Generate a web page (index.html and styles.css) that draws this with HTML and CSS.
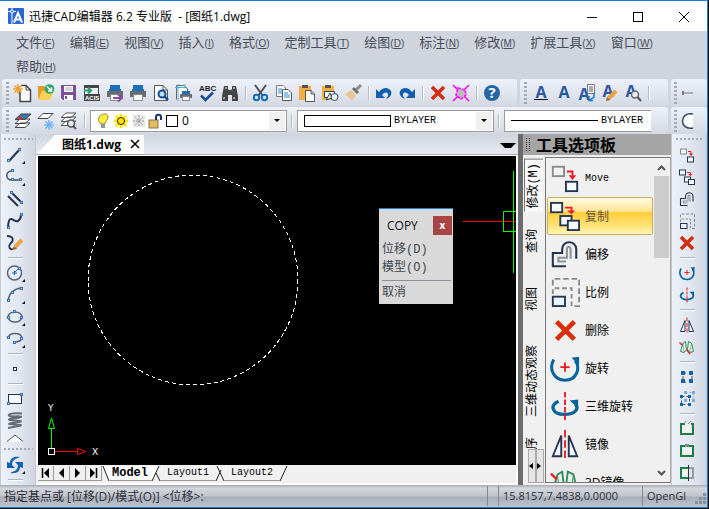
FILE: index.html
```
<!DOCTYPE html>
<html lang="zh-CN">
<head>
    <meta charset="UTF-8">
    <meta name="viewport" content="width=device-width, initial-scale=1.0">
    <title>迅捷CAD编辑器 6.2 专业版</title>
    <link rel="stylesheet" href="styles.css">
</head>
<body>
    <!-- 图标库 -->
    <svg class="sprite" aria-hidden="true">
        <symbol id="i-new" viewBox="0 0 22 22"><path d="M8 7.500V19.500H18.500V8L14 3.500H9" fill="#fff" stroke="#454545" stroke-width="1.500"/><path d="M14 3.500V8H18.500" fill="none" stroke="#454545"/><path d="M6 2V12M1 7H11M2.500 3.500L9.500 10.500M9.500 3.500L2.500 10.500" stroke="#f0a02c" stroke-width="1.500"/></symbol>
        <symbol id="i-open" viewBox="0 0 22 22"><path d="M3 17V4H9L11 6V17Z" fill="#e79a26"/><path d="M3 18L7 9H19L15 18Z" fill="#ffd257"/><circle cx="14.500" cy="7" r="4.800" fill="#2fa56d"/><path d="M12 4.500L16.500 9M16.500 5.500V9H13" stroke="#fff" stroke-width="1.500" fill="none"/></symbol>
        <symbol id="i-save" viewBox="0 0 22 22"><path d="M3 3H18V18H5L3 16Z" fill="#7d4f96"/><rect x="6" y="4" width="9" height="6" fill="#fff"/><path d="M7 6H14M7 8H14" stroke="#aaa"/><rect x="6" y="13" width="9" height="5" fill="#fff"/><rect x="7" y="14" width="2" height="3" fill="#7d4f96"/></symbol>
        <symbol id="i-acis" viewBox="0 0 22 22"><rect x="3.500" y="3.500" width="14" height="14" fill="#e8eef2" stroke="#454545"/><path d="M3 5H18" stroke="#454545" stroke-width="2"/><path d="M3 8.500H9M7 5.500L10 8.500L7 11.500" stroke="#2b9b69" stroke-width="2" fill="none"/><rect x="3" y="12" width="16" height="7" fill="#454545"/><text x="4" y="18" class="acis-label">ACIS</text></symbol>
        <symbol id="i-printer" viewBox="0 0 22 22"><rect x="6" y="3" width="10" height="5" fill="#1c6fb8"/><path d="M3 9H19V15H3Z" fill="#666c72"/><rect x="5" y="7" width="12" height="2" fill="#1c6fb8"/><path d="M6.500 12.500H15.500V18.500H6.500Z" fill="#fff" stroke="#888"/></symbol>
        <symbol id="i-plot" viewBox="0 0 22 22"><use href="#i-printer"/><path d="M9 16H17M14 12.500L18 16L14 19.500" stroke="#854fa4" stroke-width="2" fill="none"/></symbol>
        <symbol id="i-preview" viewBox="0 0 22 22"><path d="M4.500 3.500H13L17.500 8V18.500H4.500Z" fill="#fff" stroke="#555"/><path d="M13 3.500V8H17" fill="none" stroke="#555"/><circle cx="12" cy="12" r="3.500" fill="#b9ddf5" stroke="#144d93" stroke-width="2"/><path d="M14.500 14.500L18 18" stroke="#144d93" stroke-width="2.500"/></symbol>
        <symbol id="i-pages" viewBox="0 0 22 22"><path d="M3.500 17.500V3.500H11L14.500 7V10" fill="#fff" stroke="#666"/><path d="M5 2V19M12 2V6M2 5.500H14" stroke="#49b3d5"/><rect x="9" y="9" width="8" height="3" fill="#1c6fb8"/><rect x="7" y="12" width="12" height="4" fill="#666c72"/><rect x="9.500" y="14.500" width="7" height="4" fill="#fff" stroke="#888"/></symbol>
        <symbol id="i-spell" viewBox="0 0 22 22"><text x="3" y="9" class="abc-label">ABC</text><path d="M5 13.500L9.500 18L17 10.500" stroke="#164a9c" stroke-width="2.500" fill="none"/></symbol>
        <symbol id="i-find" viewBox="0 0 22 22"><path d="M5 4H9V7L10 8H12L13 7V4H17L19 14V19H13V13H9V19H3V14Z" fill="#454545"/><path d="M5 15V17M15 15V17M6 6H8M14 6H16" stroke="#fff"/></symbol>
        <symbol id="i-cut" viewBox="0 0 22 22"><path d="M5 3L13 14M16 3L8 14" stroke="#4a5057" stroke-width="2"/><circle cx="6.500" cy="15.500" r="2.700" fill="none" stroke="#156dba" stroke-width="2"/><circle cx="14.500" cy="15.500" r="2.700" fill="none" stroke="#156dba" stroke-width="2"/></symbol>
        <symbol id="i-copydoc" viewBox="0 0 22 22"><path d="M3.500 3.500H10L12.500 6V14.500H3.500Z" fill="#fff" stroke="#777"/><path d="M5 7H9M5 9H9M5 11H9" stroke="#278ad0"/><path d="M9.500 7.500H15L18.500 11V18.500H9.500Z" fill="#fff" stroke="#555"/><path d="M11 11H15M11 13H17M11 15H17" stroke="#278ad0"/></symbol>
        <symbol id="i-paste" viewBox="0 0 22 22"><rect x="3" y="4" width="12" height="14" fill="#f2ad43"/><rect x="6" y="3" width="6" height="3" fill="#555"/><path d="M9.500 8.500H15L18.500 12V19.500H9.500Z" fill="#fff" stroke="#555"/><path d="M15 8V12H18" fill="none" stroke="#555"/></symbol>
        <symbol id="i-pasteblock" viewBox="0 0 22 22"><rect x="3" y="4" width="12" height="14" fill="#f2ad43"/><rect x="6" y="3" width="6" height="3" fill="#555"/><path d="M5.500 9.500H15.500V15.500H5.500Z" fill="#fff" stroke="#31435c"/><path d="M7 18L11 11L13 16Z" fill="#e6f3fc" stroke="#31435c"/><circle cx="15.500" cy="15" r="3.500" fill="#e6f3fc" stroke="#31435c"/></symbol>
        <symbol id="i-brush" viewBox="0 0 22 22"><path d="M3 12L9 8L14 13L10 19Z" fill="#e6c795"/><path d="M10 7L12 5L17 10L15 12Z" fill="#6d6d6d"/><path d="M14 8L19 3" stroke="#8a8a8a" stroke-width="3"/></symbol>
        <symbol id="i-undo" viewBox="0 0 22 22"><path d="M3 7V16H12L9 13C12 9 16 10 15 14L13 17C19 15 20 9 16 7C13 5 9 6 6 10Z" fill="#1160ad"/></symbol>
        <symbol id="i-redo" viewBox="0 0 22 22"><path d="M19 7V16H10L13 13C10 9 6 10 7 14L9 17C3 15 2 9 6 7C9 5 13 6 16 10Z" fill="#1160ad"/></symbol>
        <symbol id="i-delete" viewBox="0 0 22 22"><path d="M5 5L17 17M17 5L5 17" stroke="#d62b0b" stroke-width="3.500"/></symbol>
        <symbol id="i-explode" viewBox="0 0 22 22"><path d="M3 3L8 8M19 3L14 8M3 19L8 14M19 19L14 14" stroke="#f0f" stroke-width="1.500"/><path d="M8 6L15 8L16 13L11 17L6 13Z" fill="#bbb" stroke="#f0f" stroke-width="1.500" stroke-dasharray="3 1"/></symbol>
        <symbol id="i-help" viewBox="0 0 22 22"><circle cx="11" cy="11" r="8" fill="#2465a4"/><text x="11" y="16" text-anchor="middle" class="help-label">?</text></symbol>
        <symbol id="i-text" viewBox="0 0 22 22"><text x="11" y="16" text-anchor="middle" class="a-label">A</text></symbol>
        <symbol id="i-textline" viewBox="0 0 22 22"><text x="11" y="16" text-anchor="middle" class="a-label">A</text><path d="M4 17.500H18" stroke="#111"/></symbol>
        <symbol id="i-textpage" viewBox="0 0 22 22"><text x="8" y="18" text-anchor="middle" class="a-label">A</text><path d="M11.500 2.500H18.500V11.500H11.500Z" fill="#fff" stroke="#777"/><path d="M13 5H17M13 7H17M13 9H17" stroke="#555"/><path d="M18 11V15L14 18M13 14V18.500H17" stroke="#1977c8" stroke-width="1.500" fill="none"/></symbol>
        <symbol id="i-textedit" viewBox="0 0 22 22"><text x="9" y="15" text-anchor="middle" class="a-label">A</text><path d="M9 17L17 9" stroke="#eda43e" stroke-width="4"/><path d="M7 19L8 15L11 18Z" fill="#8d6a48"/></symbol>
        <symbol id="i-textfind" viewBox="0 0 22 22"><text x="9" y="15" text-anchor="middle" class="a-label">A</text><circle cx="13" cy="12.500" r="3.500" fill="#e8edf3" stroke="#666" stroke-width="1.500"/><path d="M15.500 15L19 19" stroke="#555" stroke-width="2"/></symbol>
        <symbol id="i-dash" viewBox="0 0 22 22"><path d="M7 11H17" stroke="#777"/><path d="M7 9V13" stroke="#777" stroke-width="2"/></symbol>
        <symbol id="i-arcpart" viewBox="0 0 22 22"><path d="M17 4C3 1 3 21 17 18" fill="#fff" stroke="#31435c" stroke-width="1.500"/></symbol>
        <symbol id="i-layers" viewBox="0 0 22 22"><path d="M3 17.500H13L18 13H8ZM3 13.500H13L18 9H8Z" fill="#fff" stroke="#444"/><path d="M3 9.500H13L19 4H9Z" fill="#3677ad" stroke="#444"/><rect x="7" y="7" width="3" height="3" fill="#e52b20"/></symbol>
        <symbol id="i-layerfreeze" viewBox="0 0 22 22"><path d="M3 8.500H13L18 3.500H8Z" fill="#fff" stroke="#444"/><path d="M14 10V20M9 15H19M10.500 11.500L17.500 18.500M17.500 11.500L10.500 18.500" stroke="#72b4f1" stroke-width="1.500"/></symbol>
        <symbol id="i-layerfind" viewBox="0 0 22 22"><path d="M3 15.500H13L18 11H8ZM3 11.500H13L18 7H8ZM3 7.500H13L18 3H8Z" fill="#fff" stroke="#555"/><circle cx="13" cy="13.500" r="3.500" fill="#dde8ef" stroke="#555" stroke-width="1.500"/><path d="M15 16L18 19" stroke="#555" stroke-width="2"/></symbol>
        <symbol id="i-line" viewBox="0 0 22 22"><path d="M5 17L16 5" stroke="#24344f" stroke-width="2"/><g class="node"><rect x="3.500" y="15.500" width="2" height="2"/><rect x="14.500" y="4.500" width="2" height="2"/></g></symbol>
        <symbol id="i-poly" viewBox="0 0 22 22"><path d="M8 5C1 5 1 14 8 14H17" stroke="#44506a" stroke-width="1.500" fill="none"/><g class="node"><rect x="7.500" y="3.500" width="2" height="2"/><rect x="7.500" y="12.500" width="2" height="2"/><rect x="15.500" y="12.500" width="2" height="2"/></g></symbol>
        <symbol id="i-double" viewBox="0 0 22 22"><path d="M7 4L17 14M4 8L14 18" stroke="#24344f" stroke-width="2"/><g class="node"><rect x="6.500" y="3.500" width="2" height="2"/><rect x="16.500" y="13.500" width="2" height="2"/></g></symbol>
        <symbol id="i-spline" viewBox="0 0 22 22"><path d="M4 17C5 2 10 13 14 11C17 9 17 7 17 5" stroke="#24344f" stroke-width="2" fill="none"/><g class="node"><rect x="3.500" y="16.500" width="2" height="2"/><rect x="16.500" y="3.500" width="2" height="2"/></g></symbol>
        <symbol id="i-sketch" viewBox="0 0 22 22"><path d="M3 4C10 4 10 9 6 12C4 15 6 18 9 17" stroke="#24344f" stroke-width="1.800" fill="none"/><path d="M11 15L18 8" stroke="#eda43e" stroke-width="4"/><path d="M8 18L10 14L13 17Z" fill="#8f6b42"/></symbol>
        <symbol id="i-circle" viewBox="0 0 22 22"><circle cx="10.500" cy="11" r="7" fill="#e3edf6" stroke="#59647a" stroke-width="1.500"/><path d="M10 11L15 6M8 11H13M10.500 9V13" stroke="#1f5fae"/><g class="node"><rect x="14.500" y="5.500" width="2" height="2"/></g></symbol>
        <symbol id="i-arc" viewBox="0 0 22 22"><path d="M4 17C5 9 9 5 17 4" stroke="#59647a" stroke-width="1.500" fill="none"/><g class="node"><rect x="3.500" y="15.500" width="2" height="2"/><rect x="7.500" y="7.500" width="2" height="2"/><rect x="16.500" y="3.500" width="2" height="2"/></g></symbol>
        <symbol id="i-ellipse" viewBox="0 0 22 22"><ellipse cx="11" cy="11" rx="7" ry="5" fill="#e3edf6" stroke="#59647a" stroke-width="1.500"/><g class="node"><rect x="9.500" y="4.500" width="2" height="2"/><rect x="3.500" y="10.500" width="2" height="2"/><rect x="16.500" y="10.500" width="2" height="2"/></g></symbol>
        <symbol id="i-ellarc" viewBox="0 0 22 22"><path d="M4 10C5 4 17 4 18 10C18 12 15 14 11 14" stroke="#59647a" stroke-width="1.500" fill="none"/><g class="node"><rect x="3.500" y="8.500" width="2" height="2"/><rect x="16.500" y="9.500" width="2" height="2"/><rect x="9.500" y="13.500" width="2" height="2"/></g></symbol>
        <symbol id="i-point" viewBox="0 0 22 22"><rect x="9.500" y="9.500" width="3" height="3" fill="#fff" stroke="#24344f"/></symbol>
        <symbol id="i-rect" viewBox="0 0 22 22"><rect x="4.500" y="6.500" width="13" height="9" fill="#f7faff" stroke="#24344f"/><g class="node"><rect x="16.500" y="5.500" width="2" height="2"/><rect x="3.500" y="14.500" width="2" height="2"/></g></symbol>
        <symbol id="i-helix" viewBox="0 0 22 22"><path d="M18 3.500C2 2 2 7 10 6.500S20 7 12 8S2 10 10 10.500S20 11 12 12.500S2 14 10 14.500S20 15 12 16.500L4 18" fill="none" stroke="#666b74" stroke-width="2"/></symbol>
        <symbol id="i-more" viewBox="0 0 22 12"><path d="M3 9.500L11 3L19 9.500Z" fill="#fff"/><path d="M3 9.500L11 3L19 9.500" fill="none" stroke="#555"/></symbol>
        <symbol id="i-regen" viewBox="0 0 22 22"><path d="M16 3C9 2 6 5 6 9L3 8V14H11L8 11C8 6 11 5 16 3ZM6 19C13 20 16 17 16 13L19 14V8H11L14 11C14 16 11 17 6 19Z" fill="#1261b2"/></symbol>
        <symbol id="i-move" viewBox="0 0 32 32"><rect x="3" y="4" width="12" height="10" fill="#f2f2f2" stroke="#8a8a8a" stroke-width="2"/><path d="M18 9H24V15" stroke="#ec1c24" stroke-width="2" fill="none"/><path d="M20 13H28L24 18Z" fill="#ec1c24"/><rect x="17" y="20" width="12" height="10" fill="#f4faff" stroke="#26344f" stroke-width="2"/></symbol>
        <symbol id="i-copy" viewBox="0 0 32 32"><rect x="1" y="2" width="12" height="10" fill="#f4faff" stroke="#26344f" stroke-width="2"/><path d="M16 7H23V12" stroke="#ec1c24" stroke-width="2" fill="none"/><path d="M18 10H27L23 14Z" fill="#ec1c24"/><rect x="11" y="16" width="12" height="10" fill="#f4faff" stroke="#26344f" stroke-width="2"/><rect x="19" y="21" width="12" height="10" fill="#f4faff" stroke="#26344f" stroke-width="2"/></symbol>
        <symbol id="i-offset" viewBox="0 0 32 32"><path d="M28 21V11C28 1 13 1 13 11V15H3V29H17" fill="none" stroke="#26344f" stroke-width="2.200"/><path d="M22 21V12C22 7 18 7 18 12V20H9V24H17" fill="none" stroke="#8b8f96" stroke-width="2.200"/></symbol>
        <symbol id="i-scale" viewBox="0 0 32 32"><path d="M3 9V2H31V31H24" fill="none" stroke="#8a8a8a" stroke-width="2" stroke-dasharray="6 3"/><path d="M3 18V12H23V30H19" fill="none" stroke="#8a8a8a" stroke-width="2" stroke-dasharray="5 3"/><rect x="3" y="21" width="13" height="10" fill="#e8f5ff" stroke="#26344f" stroke-width="2"/></symbol>
        <symbol id="i-erase" viewBox="0 0 32 32"><path d="M7 7L26 26M26 7L7 26" stroke="#da2d08" stroke-width="5"/></symbol>
        <symbol id="i-rotate" viewBox="0 0 32 32"><path d="M4 7C-2 18 5 29 16 29C28 29 33 17 27 8" fill="none" stroke="#05639c" stroke-width="3.200"/><path d="M23 5L31 4V13Z" fill="#05639c"/><path d="M11 15H21M16 10V20" stroke="#ec1c24" stroke-width="2"/></symbol>
        <symbol id="i-rotate3d" viewBox="0 0 32 32"><path d="M9 11C-1 16 3 25 15 25C28 25 31 18 27 14" fill="none" stroke="#05639c" stroke-width="3.500"/><path d="M21 10L30 9V18Z" fill="#05639c"/><path d="M16 1V32" stroke="#ec1c24" stroke-width="2" stroke-dasharray="6 2"/></symbol>
        <symbol id="i-mirror" viewBox="0 0 32 32"><path d="M12 7V29H3ZM20 7V29H29Z" fill="#eef6ff" stroke="#26344f" stroke-width="2"/><path d="M16 1V32" stroke="#ec1c24" stroke-width="2" stroke-dasharray="8 3"/></symbol>
        <symbol id="i-mirror3d" viewBox="0 0 32 32"><path d="M3 25L8 8L13 5L15 21L10 27ZM29 25L25 8L19 5L17 21L22 27Z" fill="#e6f4eb" stroke="#358b5c" stroke-width="2"/><path d="M8 8L10 27M25 8L22 27" stroke="#358b5c"/><path d="M1 7L7 13M15 21L22 30" stroke="#ec1c24" stroke-width="2.500"/></symbol>
        <symbol id="i-array" viewBox="0 0 22 22"><path d="M7 7H16V16H7Z" fill="none" stroke="#555" stroke-dasharray="3 3"/><g fill="#1263b0"><rect x="5" y="5" width="4" height="4"/><rect x="13" y="5" width="4" height="4"/><rect x="5" y="13" width="4" height="4"/><rect x="13" y="13" width="4" height="4"/></g></symbol>
        <symbol id="i-array3d" viewBox="0 0 22 22"><g fill="#7ea8d8"><rect x="8" y="3" width="3" height="3"/><rect x="16" y="3" width="3" height="3"/><rect x="16" y="11" width="3" height="3"/><rect x="8" y="11" width="3" height="3"/></g><path d="M9.500 4.500H17.500V12.500" fill="none" stroke="#7ea8d8" stroke-dasharray="2 2"/><path d="M5.500 8.500H13.500V16.500H5.500Z" fill="none" stroke="#555" stroke-dasharray="3 2"/><g fill="#1263b0"><rect x="4" y="7" width="3" height="3"/><rect x="12" y="7" width="3" height="3"/><rect x="4" y="15" width="3" height="3"/><rect x="12" y="15" width="3" height="3"/></g></symbol>
        <symbol id="i-break" viewBox="0 0 22 22"><path d="M9 6H5V16H17V6H15" fill="#eef5f0" stroke="#1d7d43" stroke-width="2"/><path d="M8 6L10 3M12 6L15 3" stroke="#888"/></symbol>
        <symbol id="i-breakpt" viewBox="0 0 22 22"><rect x="5" y="6" width="12" height="10" fill="#eef5f0" stroke="#1d7d43" stroke-width="2"/><path d="M9 5.500H13" stroke="#888" stroke-width="3"/></symbol>
        <symbol id="i-trim" viewBox="0 0 22 22"><path d="M12 6H5V16H12" fill="#eef5f0" stroke="#1d7d43" stroke-width="2"/><path d="M13 6H17V16H13" fill="none" stroke="#999" stroke-width="2"/><path d="M12.500 3V19" stroke="#24344f"/></symbol>
    </svg>

    <div class="window">
        <header class="titlebar">
            <svg class="logo" width="16" height="16" viewBox="0 0 16 16" aria-hidden="true"><rect width="16" height="16" rx="1" fill="#2a67cf"/><path d="M4 0V16M0 3.500H8" stroke="#fff" stroke-width="1"/><circle cx="4" cy="3.500" r="1.500" fill="#2a67cf" stroke="#fff"/><path d="M6 14.500L10 5L14 14.500M7.500 11.500H12.500" fill="none" stroke="#fff" stroke-width="2"/></svg>
            <h1>迅捷CAD编辑器 6.2 专业版 &nbsp;- [图纸1.dwg]</h1>
            <div class="win-buttons">
                <button aria-label="最小化"><svg width="12" height="12"><path d="M1 6.500H11" stroke="#000"/></svg></button>
                <button aria-label="最大化"><svg width="12" height="12"><rect x="1.500" y="1.500" width="9" height="9" fill="none" stroke="#000"/></svg></button>
                <button aria-label="关闭"><svg width="12" height="12"><path d="M1 1L11 11M11 1L1 11" stroke="#000"/></svg></button>
            </div>
        </header>

        <nav class="menubar">
            <a href="#">文件<small>(<u>F</u>)</small></a>
            <a href="#">编辑<small>(<u>E</u>)</small></a>
            <a href="#">视图<small>(<u>V</u>)</small></a>
            <a href="#">插入<small>(<u>I</u>)</small></a>
            <a href="#">格式<small>(<u>O</u>)</small></a>
            <a href="#">定制工具<small>(<u>T</u>)</small></a>
            <a href="#">绘图<small>(<u>D</u>)</small></a>
            <a href="#">标注<small>(<u>N</u>)</small></a>
            <a href="#">修改<small>(<u>M</u>)</small></a>
            <a href="#">扩展工具<small>(<u>X</u>)</small></a>
            <a href="#">窗口<small>(<u>W</u>)</small></a>
            <a href="#">帮助<small>(<u>H</u>)</small></a>
        </nav>

        <div class="toolbar-row">
            <div class="toolbar main">
                <span class="grip"></span>
                <button aria-label="新建"><svg><use href="#i-new"/></svg></button>
                <button aria-label="打开"><svg><use href="#i-open"/></svg></button>
                <button aria-label="保存"><svg><use href="#i-save"/></svg></button>
                <button aria-label="导入ACIS"><svg><use href="#i-acis"/></svg></button>
                <button aria-label="绘图输出"><svg><use href="#i-plot"/></svg></button>
                <button aria-label="打印"><svg><use href="#i-printer"/></svg></button>
                <button aria-label="打印预览"><svg><use href="#i-preview"/></svg></button>
                <button aria-label="页面设置"><svg><use href="#i-pages"/></svg></button>
                <button aria-label="拼写检查"><svg><use href="#i-spell"/></svg></button>
                <button aria-label="查找"><svg><use href="#i-find"/></svg></button>
                <span class="sep"></span>
                <button aria-label="剪切"><svg><use href="#i-cut"/></svg></button>
                <button aria-label="复制到剪贴板"><svg><use href="#i-copydoc"/></svg></button>
                <button aria-label="粘贴"><svg><use href="#i-paste"/></svg></button>
                <button aria-label="粘贴为块"><svg><use href="#i-pasteblock"/></svg></button>
                <button aria-label="格式刷"><svg><use href="#i-brush"/></svg></button>
                <span class="sep"></span>
                <button aria-label="撤销"><svg><use href="#i-undo"/></svg></button>
                <button aria-label="重做"><svg><use href="#i-redo"/></svg></button>
                <span class="sep"></span>
                <button aria-label="删除"><svg><use href="#i-delete"/></svg></button>
                <button aria-label="分解"><svg><use href="#i-explode"/></svg></button>
                <span class="sep"></span>
                <button aria-label="帮助"><svg><use href="#i-help"/></svg></button>
            </div>
            <div class="toolbar text-tools">
                <span class="grip"></span>
                <button aria-label="单行文字"><svg><use href="#i-textline"/></svg></button>
                <button aria-label="多行文字"><svg><use href="#i-text"/></svg></button>
                <button aria-label="文字样式"><svg><use href="#i-textpage"/></svg></button>
                <button aria-label="编辑文字"><svg><use href="#i-textedit"/></svg></button>
                <button aria-label="查找文字"><svg><use href="#i-textfind"/></svg></button>
                <span class="sep"></span>
            </div>
            <div class="toolbar edge">
                <span class="grip"></span>
                <button aria-label="标注"><svg><use href="#i-dash"/></svg></button>
            </div>
        </div>

        <div class="toolbar-row">
            <div class="toolbar main">
                <span class="grip"></span>
                <button aria-label="图层管理"><svg><use href="#i-layers"/></svg></button>
                <button aria-label="冻结图层"><svg><use href="#i-layerfreeze"/></svg></button>
                <button aria-label="图层浏览"><svg><use href="#i-layerfind"/></svg></button>
                <span class="sep"></span>
                <label class="combo">
                    <svg class="layer-state" width="84" height="18" viewBox="0 0 84 18" aria-hidden="true">
                        <path d="M5 11C-1 4 13 -2 13 5C13 8 10 9 10 12H6Z" fill="#ffee3d" stroke="#98862c"/><rect x="6" y="12" width="4" height="4" fill="#8995a5"/>
                        <path d="M26 2V16M19 9H33M21 4L31 14M31 4L21 14" stroke="#ffe600" stroke-width="3"/><circle cx="26" cy="9" r="3.500" fill="#ffe600" stroke="#222"/>
                        <rect x="38" y="3" width="12" height="12" fill="#e6e6e6"/><path d="M44 3V15M38 9H50M40 5L48 13M48 5L40 13" stroke="#999" stroke-dasharray="2 1"/>
                        <rect x="54" y="8" width="9" height="8" fill="#e2bd69" stroke="#8e713b"/><path d="M61 8V5C61 2 66 2 66 5V8" fill="none" stroke="#1c2f76" stroke-width="2"/>
                        <rect x="71.500" y="3.500" width="11" height="11" fill="#fff" stroke="#000"/>
                    </svg>
                    <select class="layer-select" aria-label="图层"><option>0</option></select>
                    <span class="arrow"></span>
                </label>
                <span class="sep"></span>
                <label class="combo">
                    <span class="color-swatch"></span>
                    <select aria-label="颜色"><option>BYLAYER</option></select>
                    <span class="arrow"></span>
                </label>
                <span class="sep"></span>
                <label class="combo linetype">
                    <span class="line-sample"></span>
                    <select aria-label="线型"><option>BYLAYER</option></select>
                </label>
            </div>
            <div class="toolbar edge">
                <span class="grip"></span>
                <button aria-label="圆弧"><svg><use href="#i-arcpart"/></svg></button>
            </div>
        </div>

        <main class="workspace">
            <aside class="side-tools">
                <span class="grip-h"></span>
                <button class="more" aria-label="直线"><svg><use href="#i-line"/></svg></button>
                <button class="more" aria-label="多段线"><svg><use href="#i-poly"/></svg></button>
                <button aria-label="双线"><svg><use href="#i-double"/></svg></button>
                <button aria-label="样条曲线"><svg><use href="#i-spline"/></svg></button>
                <button aria-label="徒手画"><svg><use href="#i-sketch"/></svg></button>
                <span class="sep-h"></span>
                <button class="more" aria-label="圆"><svg><use href="#i-circle"/></svg></button>
                <button class="more" aria-label="圆弧"><svg><use href="#i-arc"/></svg></button>
                <button class="more" aria-label="椭圆"><svg><use href="#i-ellipse"/></svg></button>
                <button class="more" aria-label="椭圆弧"><svg><use href="#i-ellarc"/></svg></button>
                <span class="sep-h"></span>
                <button aria-label="点"><svg><use href="#i-point"/></svg></button>
                <span class="sep-h"></span>
                <button aria-label="矩形"><svg><use href="#i-rect"/></svg></button>
                <button aria-label="螺旋"><svg><use href="#i-helix"/></svg></button>
                <button class="short" aria-label="更多"><svg><use href="#i-more"/></svg></button>
                <span class="grip-h"></span>
                <button class="more" aria-label="重生成"><svg><use href="#i-regen"/></svg></button>
                <span class="sep-h"></span>
            </aside>

            <section class="document">
                <div class="doc-tabs">
                    <div class="doc-tab">
                        <span>图纸1.dwg</span>
                        <button aria-label="关闭图纸"><svg width="10" height="10"><path d="M1 1L9 9M9 1L1 9" stroke="#000" stroke-width="1.500"/></svg></button>
                    </div>
                    <button class="tab-list" aria-label="图纸列表"><span class="arrow-down"></span></button>
                </div>

                <div class="canvas">
                    <svg class="drawing" aria-label="图纸">
                        <circle cx="155" cy="124" r="105" fill="none" stroke="#fff" stroke-dasharray="4 3" shape-rendering="crispEdges"/>
                        <!-- 坐标系图标 -->
                        <g fill="none">
                            <path d="M13.500 292V273M10.500 272.500L13.500 262L16.500 272.500Z" stroke="#0f0"/>
                            <path d="M17 295.500H39M39.500 292.500L48 295.500L39.500 298.500Z" stroke="#f00"/>
                            <rect x="10.500" y="292.500" width="6" height="6" stroke="#fff"/>
                        </g>
                        <text x="10" y="255" class="axis">Y</text>
                        <text x="54" y="299" class="axis">X</text>
                        <!-- 十字光标 -->
                        <g fill="none">
                            <path d="M425 65.500H600" stroke="#f00"/>
                            <path d="M475.500 15V117M465.500 55.500H485.500V75.500H465.500Z" stroke="#0f0"/>
                        </g>
                    </svg>
                    <div class="command-menu">
                        <div class="command-title">
                            <strong>COPY</strong>
                            <button class="command-close" aria-label="关闭">x</button>
                        </div>
                        <button>位移(D)</button>
                        <button>模型(O)</button>
                        <hr>
                        <button>取消</button>
                    </div>
                </div>

                <div class="layout-bar">
                    <button class="nav-btn" aria-label="首页"><svg width="9" height="10"><path d="M1.500 0V10" stroke="#000" stroke-width="1.500"/><path d="M8 0V10L3 5Z"/></svg></button>
                    <button class="nav-btn" aria-label="上一页"><svg width="9" height="10"><path d="M7 0V10L2 5Z"/></svg></button>
                    <button class="nav-btn" aria-label="下一页"><svg width="9" height="10"><path d="M2 0V10L7 5Z"/></svg></button>
                    <button class="nav-btn" aria-label="末页"><svg width="9" height="10"><path d="M1 0V10L6 5Z"/><path d="M7.500 0V10" stroke="#000" stroke-width="1.500"/></svg></button>
                    <svg class="slash first" width="8" height="15"><path d="M1 0H8V15H7Z" fill="#fff"/><path d="M1 0L7 15" fill="none" stroke="#222"/></svg>
                    <button class="layout-tab active">Model</button>
                    <svg class="slash" width="8" height="15"><path d="M0 0H7L0 15Z" fill="#fff"/><path d="M0 15L7 0M4 7L8 15" fill="none" stroke="#222"/></svg>
                    <button class="layout-tab">Layout1</button>
                    <svg class="slash" width="8" height="15"><path d="M0 15L5 4M1 0L8 15" fill="none" stroke="#222"/></svg>
                    <button class="layout-tab">Layout2</button>
                    <svg class="slash" width="8" height="15"><path d="M0 15L7 0" fill="none" stroke="#222"/></svg>
                </div>
            </section>

            <aside class="palette">
                <h2><span class="palette-grip"></span>工具选项板</h2>
                <div class="palette-body">
                    <div class="palette-tabs">
                        <button class="active">修改(M)</button>
                        <button>查询</button>
                        <button>视图</button>
                        <button>三维动态观察</button>
                        <button class="last">序</button>
                        <div class="tab-scroll">
                            <button aria-label="向左"><svg width="4" height="6"><path d="M4 0V6L0 3Z"/></svg></button>
                            <button aria-label="向右"><svg width="4" height="6"><path d="M0 0V6L4 3Z"/></svg></button>
                        </div>
                    </div>
                    <div class="palette-list">
                        <div class="palette-items">
                            <button class="mono"><svg><use href="#i-move"/></svg>Move</button>
                            <button class="selected"><svg><use href="#i-copy"/></svg>复制</button>
                            <button><svg><use href="#i-offset"/></svg>偏移</button>
                            <button><svg><use href="#i-scale"/></svg>比例</button>
                            <button><svg><use href="#i-erase"/></svg>删除</button>
                            <button><svg><use href="#i-rotate"/></svg>旋转</button>
                            <button><svg><use href="#i-rotate3d"/></svg>三维旋转</button>
                            <button><svg><use href="#i-mirror"/></svg>镜像</button>
                            <button><svg><use href="#i-mirror3d"/></svg>3D镜像</button>
                        </div>
                        <div class="scrollbar">
                            <svg width="9" height="6"><path d="M1 5L4.500 1.500L8 5" fill="none" stroke="#555" stroke-width="2"/></svg>
                            <span class="thumb"></span>
                            <svg width="9" height="6"><path d="M1 1L4.500 4.500L8 1" fill="none" stroke="#555" stroke-width="2"/></svg>
                        </div>
                    </div>
                </div>
            </aside>

            <aside class="side-tools right">
                <span class="grip-h"></span>
                <button aria-label="移动"><svg class="small"><use href="#i-move"/></svg></button>
                <button aria-label="复制"><svg class="small"><use href="#i-copy"/></svg></button>
                <button aria-label="偏移"><svg class="small"><use href="#i-offset"/></svg></button>
                <button aria-label="比例"><svg class="small"><use href="#i-scale"/></svg></button>
                <button aria-label="删除"><svg><use href="#i-delete"/></svg></button>
                <span class="sep-h"></span>
                <button aria-label="旋转"><svg class="small"><use href="#i-rotate"/></svg></button>
                <button aria-label="三维旋转"><svg class="small"><use href="#i-rotate3d"/></svg></button>
                <span class="sep-h"></span>
                <button aria-label="镜像"><svg class="small"><use href="#i-mirror"/></svg></button>
                <button aria-label="三维镜像"><svg class="small"><use href="#i-mirror3d"/></svg></button>
                <span class="sep-h"></span>
                <button aria-label="阵列"><svg><use href="#i-array"/></svg></button>
                <button aria-label="三维阵列"><svg><use href="#i-array3d"/></svg></button>
                <span class="sep-h"></span>
                <button aria-label="打断"><svg><use href="#i-break"/></svg></button>
                <button aria-label="打断于点"><svg><use href="#i-breakpt"/></svg></button>
                <button aria-label="修剪"><svg><use href="#i-trim"/></svg></button>
            </aside>
        </main>

        <footer class="statusbar">
            <span class="prompt">指定基点或 [位移(D)/模式(O)] &lt;位移&gt;:</span>
            <span class="blank"></span>
            <span class="coords">15.8157,7.4838,0.0000</span>
            <span class="renderer">OpenGl</span>
            <svg class="resize" width="12" height="12" aria-hidden="true"><path d="M9 0H12V3H9ZM5 4H8V7H5ZM9 4H12V7H9ZM1 8H4V11H1ZM5 8H8V11H5ZM9 8H12V11H9Z" fill="#8b8f98"/></svg>
        </footer>
    </div>
</body>
</html>
```
FILE: styles.css
```
* {
    margin: 0;
    padding: 0;
    box-sizing: border-box;
}

body {
    height: 100vh;
    padding: 0 1px 1px 0;
    background: #111;
    font-family: "Open Sans", "Noto Sans CJK SC", sans-serif;
    font-size: 12px;
    color: #000;
    overflow: hidden;
}

button {
    border: 0;
    background: none;
    font: inherit;
    color: inherit;
}

.sprite {
    display: none;
}

.window {
    display: flex;
    flex-direction: column;
    height: 100%;
    border: 1px solid #1c7fd0;
    border-left-width: 0;
    background: #d0d4dd;
}

/* 标题栏 */
.titlebar {
    display: flex;
    align-items: center;
    height: 30px;
    padding-left: 8px;
    background: #fff;
}

.titlebar h1 {
    flex: 1;
    margin-left: 5px;
    font-size: 12px;
    font-weight: 400;
    white-space: pre;
}

.win-buttons {
    display: flex;
}

.win-buttons button {
    width: 46px;
    height: 30px;
}

.win-buttons svg {
    vertical-align: middle;
}

/* 菜单 */
.menubar {
    display: flex;
    flex-wrap: wrap;
    column-gap: 15px;
    padding: 0 24px 0 16px;
}

.menubar a {
    height: 24px;
    line-height: 22px;
    font-size: 13px;
    color: #474c58;
    text-decoration: none;
}

.menubar small {
    font-family: "Liberation Sans", sans-serif;
    font-size: 10px;
}

/* 工具栏 */
.toolbar-row {
    display: flex;
    gap: 3px;
    padding-left: 2px;
}

.toolbar-row + .toolbar-row {
    margin-top: 1px;
}

.toolbar {
    display: flex;
    align-items: center;
    height: 27px;
    padding-left: 4px;
    background: linear-gradient(#eef1f9, #dfe3ed 60%, #d3d8e3);
    border-radius: 3px;
    overflow: hidden;
}

.toolbar.main {
    flex: 1;
}

.toolbar.text-tools {
    width: 148px;
}

.toolbar.edge {
    width: 36px;
    padding-left: 3px;
}

.toolbar button {
    flex: none;
    width: 23px;
    height: 24px;
}

.toolbar button svg {
    display: block;
    width: 22px;
    height: 22px;
}

.toolbar.edge button {
    width: 16px;
    overflow: hidden;
}

.toolbar.edge button svg {
    margin-left: -4px;
}

.grip {
    flex: none;
    width: 3px;
    height: 22px;
    margin-right: 3px;
    background: repeating-linear-gradient(#a4a9b5 0 2px, transparent 2px 4px);
}

.sep {
    flex: none;
    width: 2px;
    height: 14px;
    margin: 0 3px;
    background: #b3b8c2;
    border-right: 1px solid #fff;
}

.combo {
    display: flex;
    flex: none;
    align-items: center;
    width: 197px;
    height: 22px;
    margin: 0 1px;
    padding-left: 4px;
    border: 1px solid #9b9b9b;
    background: #fff;
}

.combo select {
    flex: 1;
    min-width: 0;
    height: 18px;
    border: 0;
    background: transparent;
    appearance: none;
    font-family: "Liberation Mono", monospace;
    font-size: 10px;
    color: #000;
}

.combo .layer-select {
    margin-left: 3px;
    font-family: "Open Sans", sans-serif;
    font-size: 12px;
}

.combo.linetype {
    width: 147px;
    border-right: 0;
}

.arrow {
    display: flex;
    align-items: center;
    justify-content: center;
    width: 16px;
    height: 18px;
    margin-right: 1px;
    background: #f0f0f0;
}

.arrow::after,
.arrow-down::after {
    content: '';
    display: block;
    border: 3px solid transparent;
    border-top-color: #000;
    border-bottom: 0;
}

.color-swatch {
    width: 87px;
    height: 12px;
    margin: 0 3px 0 2px;
    border: 1px solid #000;
}

.line-sample {
    width: 87px;
    height: 1px;
    margin: 0 3px 0 2px;
    background: #000;
}

.acis-label {
    font: bold 6px "Liberation Sans", sans-serif;
    fill: #fff;
}

.abc-label {
    font: bold 8px "Liberation Sans", sans-serif;
    fill: #222;
}

.help-label {
    font: bold 15px "Open Sans", sans-serif;
    fill: #fff;
}

.a-label {
    font: bold 16px "Open Sans", sans-serif;
    fill: #2857a4;
}

/* 工作区 */
.workspace {
    display: flex;
    flex: 1;
    min-height: 0;
}

.side-tools {
    display: flex;
    flex: none;
    flex-direction: column;
    width: 36px;
    padding-left: 3px;
    border-left: 1px solid #c3c8d2;
    border-right: 1px solid #c3c8d2;
    background: linear-gradient(90deg, #eef1f9, #dfe4ee 60%, #d0d5e0);
    overflow: hidden;
}

.side-tools button {
    position: relative;
    flex: none;
    width: 22px;
    height: 22px;
}

.side-tools .short {
    height: 12px;
}

.side-tools svg {
    display: block;
    width: 22px;
    height: 100%;
}

.side-tools svg.small {
    width: 16px;
    height: 16px;
    margin: 0 auto;
}

.side-tools .more::after {
    content: '';
    position: absolute;
    right: 1px;
    bottom: 2px;
    border: 1px solid #000;
    border-top-color: transparent;
    border-left-color: transparent;
    border-width: 1px 1px 2px 2px;
}

.side-tools.right {
    padding-left: 4px;
}

.grip-h {
    flex: none;
    height: 10px;
    margin-right: 2px;
    background: repeating-linear-gradient(90deg, #a4a9b5 0 2px, transparent 2px 4px) 0 4px / 100% 2px no-repeat;
}

.sep-h {
    flex: none;
    width: 15px;
    height: 8px;
    margin-left: 4px;
    background: linear-gradient(#aeb3bd 50%, #fff 50%) 0 3px / 100% 2px no-repeat;
}

.node rect {
    fill: #fff;
    stroke: #2f6db8;
}

.document {
    display: flex;
    flex: 1;
    flex-direction: column;
    min-width: 0;
    background: #fff;
}

.doc-tabs {
    display: flex;
    justify-content: space-between;
    align-items: flex-end;
    height: 21px;
    padding-left: 1px;
    background: linear-gradient(#d0d4dd, #e7ebf4);
    border-bottom: 1px solid #a5abb8;
}

.doc-tab {
    display: flex;
    align-items: center;
    height: 19px;
    padding: 0 4px 2px 25px;
    background: #fff;
    clip-path: polygon(0 100%, 18px 0, 100% 0, 100% 100%);
    font-weight: 700;
}

.doc-tab button {
    display: flex;
    margin-left: 9px;
}

.tab-list {
    width: 16px;
    height: 18px;
    margin-right: 2px;
}

.arrow-down::after {
    margin: 0 auto;
    border-width: 5px 5px 0;
}

.canvas {
    position: relative;
    flex: 1;
    min-height: 0;
    margin: 1px 2px 0;
    background: #000;
    overflow: hidden;
}

.drawing {
    display: block;
    width: 100%;
    height: 100%;
}

.axis {
    font: 9px "DejaVu Sans", sans-serif;
    fill: #fff;
}

/* 命令菜单 */
.command-menu {
    position: absolute;
    left: 341px;
    top: 52px;
    width: 74px;
    padding: 0 2px 2px 3px;
    background: #d9d9d9;
    border-top: 1px solid #1c7fd0;
    color: #41464f;
}

.command-title {
    display: flex;
    align-items: center;
    justify-content: space-between;
    height: 32px;
    padding-left: 5px;
}

.command-title strong {
    font-size: 12px;
    font-weight: 400;
    color: #111;
}

.command-close {
    width: 19px;
    height: 19px;
    margin-right: -1px;
    background: #a84444;
    color: #fff;
    line-height: 16px;
    font-size: 10px;
    font-weight: 700;
}

.command-menu > button {
    display: block;
    height: 18px;
    line-height: 18px;
    font-family: "Liberation Mono", "Noto Sans CJK SC", monospace;
}

.command-menu hr {
    margin: 3px 0;
    border: 0;
    border-top: 1px solid #8d9099;
}

/* 布局标签 */
.layout-bar {
    display: flex;
    height: 20px;
    margin-right: 2px;
    padding: 1px 0 2px 2px;
    background: #f0f0f0;
    border-bottom: 2px solid #fff;
}

.nav-btn {
    display: flex;
    align-items: center;
    justify-content: center;
    width: 16px;
    height: 15px;
    border-right: 1px solid #999;
    border-bottom: 1px solid #999;
}

.layout-tab {
    height: 15px;
    padding: 0 7px;
    border-bottom: 1px solid #999;
    font-family: "Liberation Mono", monospace;
    font-size: 10px;
    line-height: 14px;
}

.layout-tab.active {
    padding: 0 4px 0 2px;
    background: #fff;
    font-size: 12px;
    font-weight: 700;
}

/* 工具选项板 */
.palette {
    display: flex;
    flex: none;
    flex-direction: column;
    width: 153px;
    border-left: 5px solid #6b6b6b;
    background: #f0f0f0;
}

.palette h2 {
    display: flex;
    align-items: center;
    height: 21px;
    padding-left: 3px;
    background: #a5a5a5;
    font-size: 16px;
    line-height: 20px;
}

.palette-grip {
    width: 4px;
    height: 14px;
    margin-right: 6px;
    background:
        linear-gradient(90deg, transparent 1px, #a5a5a5 1px 3px, transparent 3px),
        repeating-linear-gradient(#333 0 1px, transparent 1px 2px);
}

.palette-body {
    display: flex;
    flex: 1;
    min-height: 0;
    padding: 2px 0 2px 1px;
}

.palette-tabs {
    display: flex;
    flex-direction: column;
    width: 21px;
    padding-top: 2px;
}

.palette-tabs > button {
    flex: none;
    width: 19px;
    padding: 17px 0;
    writing-mode: vertical-rl;
    text-orientation: sideways;
    transform: rotate(180deg);
    font-family: "Liberation Mono", "Noto Sans CJK SC", monospace;
    line-height: 19px;
}

.palette-tabs > .active {
    padding: 3px 0;
    border: 1px solid #777;
    border-width: 0 1px 1px 0;
    background: #f8f8f8;
}

.palette-tabs > .last {
    flex: 1;
    min-height: 0;
    padding: 0 0 5px;
    overflow: hidden;
}

.tab-scroll {
    display: flex;
    height: 34px;
    margin-left: 4px;
}

.tab-scroll button {
    width: 8px;
    border: 1px solid #aaa;
    background: #e5e5e5;
}

.tab-scroll svg {
    display: block;
}

.palette-list {
    display: flex;
    flex: 1;
    min-width: 0;
    border: 1px solid #777;
    border-right-color: #aaa;
    overflow: hidden;
}

.palette-items {
    flex: 1;
    padding: 1px 0 0 1px;
}

.palette-items button {
    display: flex;
    align-items: center;
    gap: 5px;
    width: 100%;
    height: 38px;
    padding-left: 2px;
    border: 1px solid transparent;
    border-radius: 2px;
}

.palette-items svg {
    flex: none;
    width: 30px;
    height: 32px;
}

.palette-items .mono {
    font-family: "Liberation Mono", monospace;
    font-size: 10px;
}

.palette-items .selected {
    border-color: #c9ad5e;
    background: linear-gradient(#fffbe5, #ffe48e 38%, #ffce3b 40%, #ffe172 75%, #fff6b5);
    color: #62553a;
}

.scrollbar {
    display: flex;
    flex-direction: column;
    align-items: center;
    width: 17px;
    padding: 7px 0 6px;
    background: #f0f0f0;
}

.thumb {
    width: 15px;
    height: 82px;
    margin: 5px 0 auto;
    background: #cdcdcd;
}

/* 状态栏 */
.statusbar {
    display: flex;
    align-items: center;
    height: 22px;
    background: linear-gradient(#a9acb3, #d3d6dc 15%, #c1c4cb 50%, #a9adb7 55%, #c0c3cb);
    color: #2b2f38;
}

.prompt {
    flex: 1;
    padding-left: 4px;
}

.blank,
.coords,
.renderer {
    height: 20px;
    padding-left: 4px;
    border-left: 1px solid #85888f;
    line-height: 20px;
    font-size: 11px;
}

.blank {
    width: 11px;
}

.coords {
    width: 144px;
}

.renderer {
    width: 50px;
}

.resize {
    margin: 6px 1px 0 2px;
}
```
